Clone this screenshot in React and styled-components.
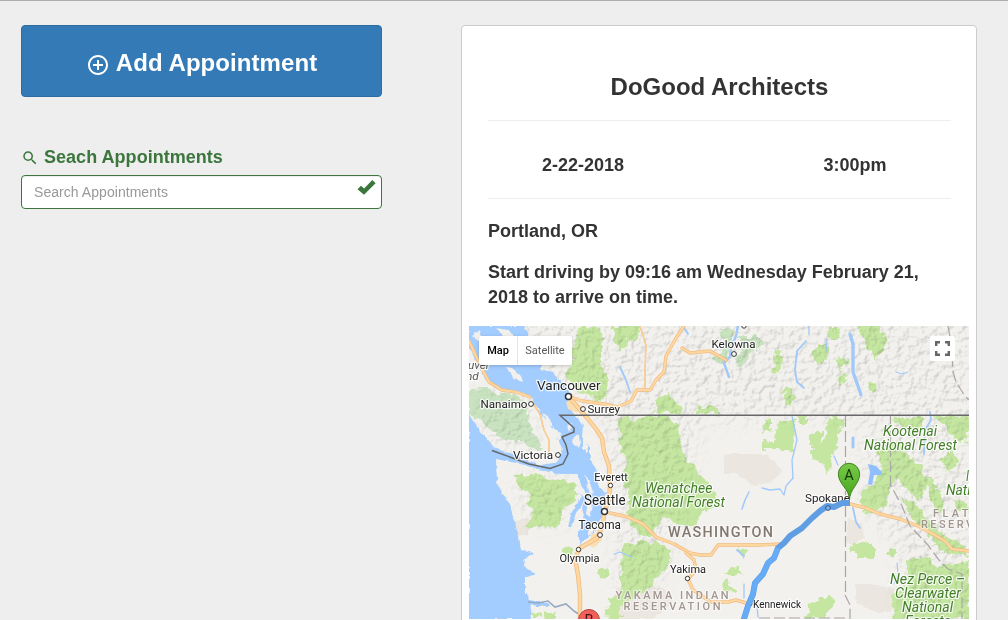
import React from "react";
import styled, { createGlobalStyle } from "styled-components";
import { MdControlPoint, MdSearch } from "react-icons/md";

const GlobalStyle = createGlobalStyle`
  *, *::before, *::after { box-sizing: border-box; }
  body {
    margin: 0;
    background: #eee;
    color: #333;
    font-family: "Liberation Sans", Arial, sans-serif;
    overflow: hidden;
  }
`;

const Page = styled.div`
  display: flex;
  align-items: flex-start;
  gap: 79px;
  height: 620px;
  padding: 24px 31px 0 21px;
  border-top: 1px solid #b0acae;
  overflow: hidden;
`;

const Sidebar = styled.aside`
  width: 361px;
  flex: none;
`;

const AddButton = styled.button`
  display: flex;
  align-items: center;
  justify-content: center;
  gap: 8px;
  width: 100%;
  height: 72px;
  padding: 3px 0 0;
  border: 1px solid #2e6da4;
  border-radius: 4px;
  background: #337ab7;
  color: #fff;
  font: bold 24px "Liberation Sans", Arial, sans-serif;
  letter-spacing: 0.07px;
  svg { width: 24px; height: 24px; margin: 5px -2px 0 0; }
`;

const SearchLabel = styled.label`
  display: flex;
  align-items: center;
  gap: 7px;
  height: 26px;
  margin: 47px 0 5px;
  color: #3c763d;
  font-size: 18px;
  font-weight: bold;
  letter-spacing: 0.03px;
  svg { width: 18px; height: 18px; margin: 2px -2px 0 0; }
`;

const SearchField = styled.div`
  display: flex;
  justify-content: space-between;
  align-items: flex-start;
  height: 34px;
  padding: 0 5px 0 12px;
  border: 1px solid #3c763d;
  border-radius: 4px;
  background: #fff;
  box-shadow: inset 0 1px 1px rgba(0, 0, 0, 0.075);
  svg { margin-top: 3px; flex: none; }
`;

const SearchInput = styled.input`
  flex: 1;
  min-width: 0;
  height: 32px;
  padding: 0;
  border: 0;
  outline: 0;
  background: transparent;
  font: 14px "Liberation Sans", Arial, sans-serif;
  letter-spacing: 0.05px;
  &::placeholder { color: #999; opacity: 1; }
`;

const Card = styled.main`
  width: 516px;
  height: 620px;
  padding: 0 7px;
  border: 1px solid #ccc;
  border-radius: 4px;
  background: #fff;
`;

const Details = styled.section`
  padding: 0 18px 0 19px;
`;

const Title = styled.h3`
  margin: 0;
  padding-top: 44px;
  height: 95px;
  border-bottom: 1px solid #eee;
  text-align: center;
  font-size: 24px;
  line-height: 34px;
`;

const Schedule = styled.div`
  display: grid;
  grid-template-columns: 190px 192px;
  justify-content: space-between;
  align-items: center;
  height: 78px;
  padding-top: 12px;
  border-bottom: 1px solid #eee;
  text-align: center;
  font-size: 18px;
  font-weight: bold;
`;

const Note = styled.p`
  margin: ${(p) => p.$top}px 0 0;
  font-size: 18px;
  line-height: 25px;
  font-weight: bold;
`;

const MapFrame = styled.div`
  position: relative;
  width: 500px;
  height: 293px;
  margin-top: 16px;
  overflow: hidden;
  font-family: Roboto, sans-serif;
  > svg { display: block; }
`;

const MapTypes = styled.div`
  position: absolute;
  left: 10px;
  top: 10px;
  display: flex;
  height: 29px;
  background: #fff;
  border-radius: 2px;
  box-shadow: 0 1px 4px -1px rgba(0, 0, 0, 0.3);
`;

const MapType = styled.span`
  width: ${(p) => p.$width}px;
  border-left: ${(p) => (p.$active ? "0" : "1px solid #e6e6e6")};
  color: ${(p) => (p.$active ? "#000" : "#565656")};
  font-size: 11px;
  font-weight: ${(p) => (p.$active ? 500 : 400)};
  line-height: 29px;
  text-align: center;
`;

const Fullscreen = styled.div`
  position: absolute;
  right: 14px;
  top: 10px;
  display: grid;
  place-items: center;
  width: 25px;
  height: 25px;
  background: #fff;
  border-radius: 2px;
`;

const Label = styled.text`
  font-family: Roboto, sans-serif;
  font-size: ${(p) => p.$size}px;
  font-style: ${(p) => (p.$italic ? "italic" : "normal")};
  font-weight: ${(p) => p.$weight || 400};
  fill: ${(p) => p.$color || "#222"};
  stroke: #fff;
  stroke-opacity: ${(p) => p.$halo || 0.8};
  stroke-width: 2.5px;
  stroke-linejoin: round;
  paint-order: stroke;
`;

const GREEN = "#437f28";
const BROWN = "#a19690";

const labels = [
  ["Vancouver", 537, 390, 13.3, 63.5],
  ["Nanaimo", 480.5, 408, 11.8, 47],
  ["Surrey", 587.5, 413, 11.8, 32.5],
  ["Victoria", 513, 459, 11.8, 40],
  ["Kelowna", 711.5, 348, 11.8, 44],
  ["Everett", 594.3, 480.8, 10.8, 33.5],
  ["Seattle", 584, 504.6, 13.8, 41.5],
  ["Tacoma", 578.5, 529, 12.2, 42.5],
  ["Olympia", 559.5, 562, 11.8, 40],
  ["Yakima", 670, 573, 11.8, 36],
  ["Kennewick", 753, 607.7, 10.6, 48],
  ["Spokane", 805, 501.8, 11.8, 45],
];

const areaLabels = [
  ["Wenatchee", 645, 493, 13.8, 67.5],
  ["National Forest", 632, 507, 13.8, 93],
  ["Kootenai", 883, 436, 13.8, 54],
  ["National Forest", 864, 450, 13.8, 93],
  ["Nati", 946, 494.5, 13.8, 24.5],
  ["I", 966, 481, 13.8, 3],
  ["Nez Perce –", 890, 584, 13.8, 75],
  ["Clearwater", 895, 598, 13.8, 66],
  ["National", 902, 612, 13.8, 51],
  ["Forests", 905, 626, 13.8, 46],
];

const regionLabels = [
  ["WASHINGTON", 668, 537.3, 14.4, 105, "#81776f"],
  ["YAKAMA INDIAN", 615.5, 598.8, 11, 113, BROWN],
  ["RESERVATION", 623.5, 610, 11, 97, BROWN],
  ["FLAT", 933, 516.7, 11, 35.5, BROWN],
  ["RESERV", 921, 528, 11, 52, BROWN],
];

const towns = [
  [568.5, 396.5, 3], [531, 404, 2.4], [583, 409, 2.4], [558, 455, 2.4],
  [734, 354, 2.4], [744, 326, 2.2], [610.5, 485.5, 2.2], [604.5, 511.5, 3],
  [600, 535, 2.4], [578.5, 549.5, 2.2], [687.5, 578.5, 2.2],
  [750, 604, 2],
];

const forests = [
  "M574 344L580 328L598 326L604 340L601 360L608 378L606 398L596 402L590 394L578 392L566 378L570 366Z",
  "M612 326H640L638 338L628 340L622 350L614 340Z",
  "M620 418L628 415L634 420L650 416L664 414L676 422L682 434L680 448L694 468L706 480L716 494L718 506L702 512L692 528L678 524L664 516L652 534L642 534L632 528L626 512L630 500L622 480L626 462L621 448Z",
  "M622 546L632 543H660L671 550L668 568L656 580L650 588L640 592L632 600L618 604L610 608L608 600L620 592Z",
  "M608 604L622 602V619H606Z",
  "M656 401L662 394L668 391L672 398L682 408L680 414L656 412Z",
  "M697 407H720V414H697Z",
  "M513 475L530 474L576 484V500L566 506L562 518L556 528L524 526L534 512L526 502L532 496L520 486Z",
  "M773 354L780 351L784 356L778 374L774 375Z",
  "M783 390L789 387L795 398L790 407L784 398Z",
  "M765 418L772 416V428L764 435Z M762 443L773 440L780 419H793L794 450H762Z",
  "M796 416H807V423H798Z M810 434L822 430V445H810Z",
  "M855 326H880L886 340L884 352L875 360L866 344Z",
  "M829 327L842 328L840 338L829 338Z M813 350L826 343L828 356L820 365L813 358Z",
  "M836 360L843 354L848 363L841 370L836 366Z M837 378L845 374L847 381L840 385Z M868 384L876 382L875 392L868 389Z",
  "M828 418H846L838 432L838 444L832 456L830 472L824 464L812 458V446L824 442Z",
  "M860 500L862 492L874 484L880 468L884 462L892 468L894 484L888 496L884 508L864 514Z",
  "M892 418H922V430L910 432L898 424Z M876 452L884 442L900 442L908 458L922 466L928 486L918 500L908 490L900 480L890 476L880 466Z",
  "M904 500L918 504L928 520L944 536L966 546V556L942 552L926 530L910 518Z",
  "M940 460L952 450L958 462L948 472Z M926 476L934 480L944 500L938 514L930 500Z M954 500L969 504V512L958 510Z",
  "M906 560L926 556L938 568L969 560V619H894L892 596L908 584Z",
  "M934 416H969V436L962 444L950 434L944 424Z",
  "M849 546L862 541L873 544V558H858L856 552Z M887 550H895V555H887Z",
  "M810 604L822 598H832L834 608L824 612V619H806Z",
  "M598 570L604 566L609 571V577L600 578Z M562 550L570 547L573 553L566 556Z",
  "M724 576L730 567L739 566L742 578L738 574L732 574Z M721 588L724 580L736 591V593Z M738 548L745 550L746 558L741 556Z",
  "M543 612H556V619H543Z M532 614L540 612V617H532Z",
];

const islandForests = [
  "M469 389L486 388L498 394L511 392L522 400L530 410L528 422L532 432L540 440L544 448L532 450L521 442L507 440L494 434L480 420L469 415Z",
  "M720 329L736 329L730 348L724 362L712 360L724 348Z",
  "M738 338L756 336L765 342L754 352L746 362L738 366L734 360L742 350Z",
];

const clearings = [
  "M514 522L528 518L531 526L528 536H516Z",
  "M724 454H766L782 470L772 482L754 486L736 474H724Z",
  "M848 518L862 524L864 538L852 546L846 540Z",
  "M856 584L872 584L894 588L892 612L876 612L856 602Z",
  "M616 588L640 584L664 589L674 602L652 619H620L614 604Z",
];

const roads = [
  { d: "M469 341L480 365L489 382L502 390L516 392L530 397" },
  { d: "M532 402L540 414L544 430L549 440L549 452", thin: true },
  { d: "M568 396L575 404L588 419L596 429L602 438L604 452L609 466L610 486L609 500L604 512L603 525L597 538L580 548L575 558L578 575L580 595L580 619", wide: true },
  { d: "M568 396L582 401L604 404L618 407L631 401L637 390H650L656 380L664 372L666 356L676 338L684 326" },
  { d: "M682 348L690 353L700 352L710 351L726 360" },
  { d: "M610 513L628 517L643 524L656 537L674 544L690 553L700 555H711L718 545H760L782 544" },
  { d: "M686 553L694 560L696 570L688 579L693 590L711 602L728 602L736 600L746 603" },
  { d: "M850 504L866 508L880 514L900 519L918 526L935 535L945 541L952 549L969 551" },
  { d: "M640 326L646 345L645 370L645 388", thin: true },
];

const lakes = [
  { d: "M738 326L736 336L731 348L730 357L724 363L729 377", w: 2.4 },
  { d: "M850 334L853 344V372L858 386L861 395", w: 3.3 },
  { d: "M806 341L797 351L795 370L797 382L804 388" },
  { d: "M930 412L931 420L925 430L924 454" },
  { d: "M792 416L797 440L792 460L793 478", w: 1.3 },
  { d: "M853 438L853 447", w: 3 },
  { d: "M834 456L838 465M809 326V334M827 340L826 351", w: 1.3 },
  { d: "M853 508L856 522L860 528" },
  { d: "M749 492L745 500L742 509", w: 1.5 },
  { d: "M762 488L770 490L780 489L784 495L786 486L793 478", w: 1.3 },
  { d: "M614 554L620 552L632 557", w: 1.3 },
  { d: "M744 584V598M757 606L758 617", w: 1.3 },
  { d: "M737 550L744 556" },
  { d: "M683 326L688 334M620 367L626 380L630 392" },
  { d: "M894 584L898 573L897 563M896 372L902 374L908 372", w: 1 },
];

const borders = [
  "M845.5 416V595",
  "M890.5 416V485L902 506L910 526L928 545L939 560L948 569L962 574L962 590V619",
  "M845 595L850 605V619M845 618H758",
  "M948 326L951 342L952 354L953 372L956 382L965 396L969 400",
];

function CoastWater() {
  return (
    <g fill="#a3ccff">
      <path d="M469 326H524L530 336L548 355L540 369L553 372L562 383L569 391L568 403L574 415L583 425L582 437L590 447V460L597 470L598 485L606 494L602 504L602 516L594 533L580 544L578 532L585 520L582 508L586 495L577 474L560 474L545 471L520 464L496 459L497 482L503 495L510 504L514 521L519 536L521 550L534 554L523 560L526 568L535 574L525 578V590L530 600L532 619H469V415L480 431L493 447L515 455L540 465L558 462L562 448L553 430L539 410L532 398L518 391L500 390L487 381L478 366L469 346Z" />
      <path d="M576 491L582 496L572 512L568 527L571 527L576 514L586 498Z" />
      <path d="M525 598L536 602H548L550 606L536 606L526 602Z" />
    </g>
  );
}

function RouteMap() {
  return (
    <svg width="500" height="293" viewBox="469 326 500 293">
      <defs>
        <filter id="ragged" x="-5%" y="-5%" width="110%" height="110%">
          <feTurbulence type="fractalNoise" baseFrequency="0.13" numOctaves="3" seed="4" />
          <feDisplacementMap in="SourceGraphic" scale="10" xChannelSelector="R" yChannelSelector="G" />
        </filter>
        <filter id="shore" x="-5%" y="-5%" width="110%" height="110%">
          <feTurbulence type="fractalNoise" baseFrequency="0.18" numOctaves="2" seed="9" />
          <feDisplacementMap in="SourceGraphic" scale="4" xChannelSelector="R" yChannelSelector="G" />
        </filter>
        <filter id="relief" x="0" y="0" width="100%" height="100%" colorInterpolationFilters="sRGB">
          <feTurbulence type="fractalNoise" baseFrequency="0.15" numOctaves="3" seed="12" />
          <feColorMatrix values="0 0 0 0 0  0 0 0 0 0  0 0 0 0 0  1 0 0 0 0" />
          <feDiffuseLighting surfaceScale="3.5" diffuseConstant="1.22" lightingColor="#fff">
            <feDistantLight azimuth="225" elevation="56" />
          </feDiffuseLighting>
        </filter>
        <filter id="soft"><feGaussianBlur stdDeviation="10" /></filter>
        <mask id="mountains">
          <g fill="#fff" filter="url(#soft)">
            <path d="M460 310H980V420H700L690 500L660 590H615L618 480L590 400L520 360L460 350Z" />
            <path d="M515 475H570V525H525ZM860 420H980V640H900V545L865 510ZM470 390H530L540 450H490Z" />
          </g>
        </mask>
        <linearGradient id="pinA" x1="0" y1="0" x2="0" y2="1">
          <stop offset="0" stopColor="#79c94b" /><stop offset="1" stopColor="#43a516" />
        </linearGradient>
      </defs>
      <rect x="469" y="326" width="500" height="293" fill="#f3f1ee" />
      <g fill="#ebe6df" filter="url(#shore)">{clearings.map((d) => <path key={d} d={d} />)}</g>
      <g fill="#c4e6a0" filter="url(#ragged)">{forests.map((d) => <path key={d} d={d} />)}</g>
      <g fill="#c9e3c0" filter="url(#ragged)">{islandForests.map((d) => <path key={d} d={d} />)}</g>
      <rect x="469" y="326" width="500" height="293" filter="url(#relief)" mask="url(#mountains)" opacity="0.17" style={{ mixBlendMode: "multiply" }} />
      <g filter="url(#shore)">
        <CoastWater />
        <g fill="#f1f0ec">
          <path d="M472 336L480 330L482 344ZM496 328L508 330L516 338L504 336ZM506 367L512 368L521 376L523 382L514 379ZM543 413L548 416L553 426L548 424ZM553 427L562 434L560 440L553 435ZM567 424L573 423L570 432ZM574 436L579 434L580 447L573 444ZM583 437L587 440L588 454L583 450ZM584 474L589 481L594 493L590 494ZM588 500L593 506L590 517L586 514ZM590 526L597 522L592 534L587 536Z" />
        </g>
      </g>
      <g fill="none" stroke="#a0c8fb" strokeLinejoin="round" strokeLinecap="round">
        {lakes.map(({ d, w }) => <path key={d} d={d} strokeWidth={w || 1.8} />)}
      </g>
      <path d="M868 484L870 472L868 464L876 466L882 472L881 475L874 475L872 485Z" fill="#8fbfff" />
      <path d="M566 402L575 400L581 407L577 413L568 409ZM592 534L601 533L602 540L594 548L588 545Z" fill="#f9dfb6" />
      <path d="M528 602L538 603L548 601L555 607L566 604L574 611L580 615" fill="none" stroke="#98a9c5" strokeWidth="1.6" />
      <g fill="none" strokeLinejoin="round" strokeLinecap="round">
        {roads.map(({ d, wide, thin }) => (
          <g key={d}>
            <path d={d} stroke="#f1bb80" strokeWidth={wide ? 4.4 : thin ? 1.5 : 3.4} />
            <path d={d} stroke="#ffd7a0" strokeWidth={wide ? 2.8 : thin ? 0.8 : 2} />
          </g>
        ))}
      </g>
      <g fill="none" stroke="#aaa6a6" strokeWidth="1.2" strokeDasharray="11 4">
        {borders.map((d) => <path key={d} d={d} />)}
      </g>
      <path d="M969 415.3H560L574 428V432L562 437L566 445L568 454L563 464L550 468.5L529 464L492 450.5" fill="none" stroke="#666768" strokeWidth="1.5" />
      {regionLabels.map(([text, x, y, size, length, color]) => (
        <Label key={text} x={x} y={y} textLength={length} $size={size} $weight={500} $halo={0.5} $color={color}>{text}</Label>
      ))}
      {areaLabels.map(([text, x, y, size, length]) => (
        <Label key={`${text}${y}`} x={x} y={y} textLength={length} lengthAdjust="spacingAndGlyphs" $size={size} $italic $color={GREEN}>{text}</Label>
      ))}
      {towns.map(([x, y, r]) => <circle key={`${x}-${y}`} cx={x} cy={y} r={r} fill="#fff" stroke="#333" strokeWidth={r > 2.5 ? 1.5 : 1} />)}
      {labels.map(([text, x, y, size, length]) => (
        <Label key={text} x={x} y={y} textLength={length} lengthAdjust="spacingAndGlyphs" $size={size}>{text}</Label>
      ))}
      <Label x="468" y="368.5" $size={11.8} $italic $color="#555">uver</Label>
      <Label x="466" y="380" $size={11.8} $italic $color="#555">nd</Label>
      <path d="M743 622L748 606L753 594L755 583L763 574L768 563L774 558L778 548L784 543L790 536L802 528L812 518L820 511L827 506L834 507L842 503L850 503" fill="none" stroke="#5f9ee3" strokeWidth="6" strokeLinejoin="round" />
      <path d="M743 622L748 606L753 594L755 583L763 574L768 563L774 558L778 548" fill="none" stroke="#66abf5" strokeWidth="5" strokeLinejoin="round" />
      <circle cx="828" cy="508" r="2.4" fill="#7fb1e8" stroke="#2c598e" />
      <path d="M849.5 500C849.5 489 838.3 484 838.3 474A10.7 10.7 0 0 1 859.7 474C859.7 484 849.5 489 849.5 500Z" fill="url(#pinA)" stroke="#397a1b" strokeWidth="0.9" />
      <text x="849" y="480" textAnchor="middle" fontFamily="Roboto, sans-serif" fontSize="14.5" fill="#17340b">A</text>
      <circle cx="589" cy="620" r="10.5" fill="#f2605c" stroke="#b3433f" />
      <text x="589" y="625" textAnchor="middle" fontFamily="Roboto, sans-serif" fontSize="14.5" fill="#4c1513">B</text>
    </svg>
  );
}

export default function App() {
  return (
    <>
      <GlobalStyle />
      <Page>
        <Sidebar>
          <AddButton><MdControlPoint />Add Appointment</AddButton>
          <SearchLabel htmlFor="search"><MdSearch />Seach Appointments</SearchLabel>
          <SearchField>
            <SearchInput id="search" placeholder="Search Appointments" />
            <svg width="19" height="17" viewBox="0 0 19 17"><path d="M0.5 10.3L4 6.8L7.1 9.5L15.3 1L18.6 4.2L7 15.7Z" fill="#3c763d" /></svg>
          </SearchField>
        </Sidebar>
        <Card>
          <Details>
            <Title>DoGood Architects</Title>
            <Schedule><span>2-22-2018</span><span>3:00pm</span></Schedule>
            <Note $top={20}>Portland, OR</Note>
            <Note $top={16}>Start driving by 09:16 am Wednesday February 21, 2018 to arrive on time.</Note>
          </Details>
          <MapFrame>
            <RouteMap />
            <MapTypes>
              <MapType $active $width={38}>Map</MapType>
              <MapType $width={55}>Satellite</MapType>
            </MapTypes>
            <Fullscreen>
              <svg width="15" height="15" viewBox="0 0 15 15" fill="none" stroke="#666" strokeWidth="2.4">
                <path d="M1.2 5V1.2H5M10 1.2H13.8V5M13.8 10V13.8H10M5 13.8H1.2V10" />
              </svg>
            </Fullscreen>
          </MapFrame>
        </Card>
      </Page>
    </>
  );
}
